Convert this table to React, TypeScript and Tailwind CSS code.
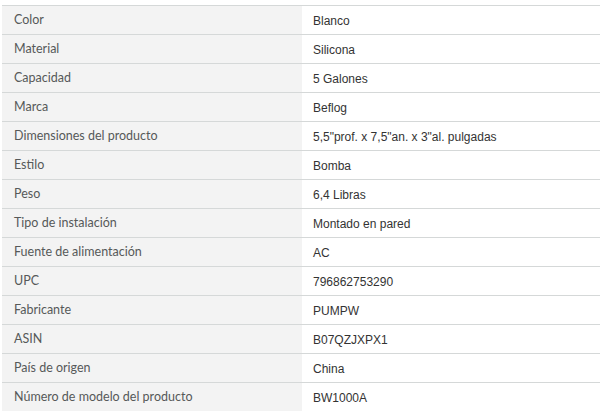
const rows: [string, string][] = [
  ["Color", "Blanco"],
  ["Material", "Silicona"],
  ["Capacidad", "5 Galones"],
  ["Marca", "Beflog"],
  ["Dimensiones del producto", "5,5\"prof. x 7,5\"an. x 3\"al. pulgadas"],
  ["Estilo", "Bomba"],
  ["Peso", "6,4 Libras"],
  ["Tipo de instalación", "Montado en pared"],
  ["Fuente de alimentación", "AC"],
  ["UPC", "796862753290"],
  ["Fabricante", "PUMPW"],
  ["ASIN", "B07QZJXPX1"],
  ["País de origen", "China"],
  ["Número de modelo del producto", "BW1000A"],
];

export default function App() {
  return (
    <div className="w-[600px] h-[411px] overflow-hidden bg-white pt-[5px] pl-[2px]">
      <table className="w-full border-collapse">
        <tbody>
          {rows.map(([label, value]) => (
            <tr key={label} className="h-[29px] border-t border-b border-[#d5d8d8]">
              <td className="w-[300px] bg-[#f3f3f3] pl-3 pt-[1px] align-middle text-[12.5px] text-[#565959] font-['Lato',sans-serif]">
                {label}
              </td>
              <td className="pl-[11px] pt-[1px] align-middle text-[12px] text-[#333] font-['Liberation_Sans',Arial,sans-serif]">
                {value}
              </td>
            </tr>
          ))}
        </tbody>
      </table>
    </div>
  );
}
